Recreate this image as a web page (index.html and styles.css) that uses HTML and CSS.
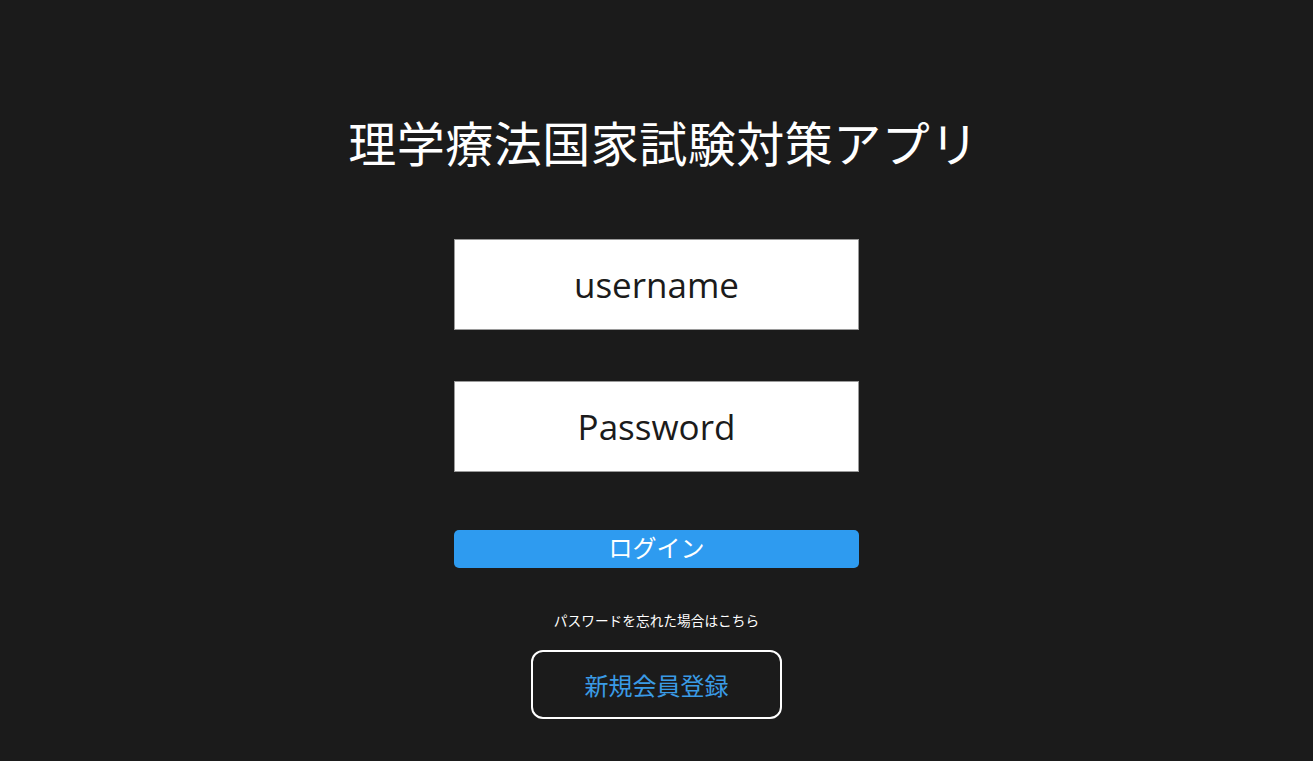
FILE: index.html
```html
<!DOCTYPE html>
<html lang="ja">
<head>
<meta charset="utf-8">
<title>理学療法国家試験対策アプリ</title>
<link rel="stylesheet" href="styles.css">
</head>
<body>
<main class="login">
  <h1 class="title">理学療法国家試験対策アプリ</h1>
  <form class="form">
    <input class="field" type="text" placeholder="username">
    <input class="field field-pass" type="password" placeholder="Password">
    <button class="btn-login" type="button">ログイン</button>
    <a class="forgot" href="#">パスワードを忘れた場合はこちら</a>
    <button class="btn-register" type="button">新規会員登録</button>
  </form>
</main>
</body>
</html>
```

FILE: styles.css
```css
html, body {
  margin: 0;
  padding: 0;
  background: #1b1b1b;
  height: 100%;
}
body {
  font-family: "Open Sans", "Noto Sans CJK JP", sans-serif;
  color: #fff;
}
.login {
  display: flex;
  flex-direction: column;
  align-items: center;
  padding-top: 106px;
}
.title {
  margin: 0;
  padding-left: 14px;
  font-family: "Noto Sans CJK JP", sans-serif;
  font-weight: 400;
  font-size: 48px;
  letter-spacing: 0.5px;
  line-height: 70px;
  height: 70px;
  color: #fff;
}
.form {
  display: flex;
  flex-direction: column;
  align-items: center;
  margin-top: 63px;
}
.field {
  box-sizing: border-box;
  width: 405px;
  height: 91px;
  margin: 0;
  border: 1px solid #9a9a9a;
  background: #fff;
  text-align: center;
  font-family: "Open Sans", sans-serif;
  font-size: 35px;
  color: #1b1b1b;
  outline: none;
  padding: 0;
}
.field::placeholder {
  color: #1b1b1b;
  opacity: 1;
}
.field-pass {
  margin-top: 51px;
}
.btn-login {
  box-sizing: border-box;
  width: 405px;
  height: 38px;
  margin-top: 58px;
  border: none;
  border-radius: 5px;
  background: #2e9bf0;
  color: #fff;
  font-family: "Noto Sans CJK JP", sans-serif;
  font-size: 24px;
  line-height: 34px;
  padding: 0 0 4px;
}
.forgot {
  margin-top: 42px;
  font-family: "Noto Sans CJK JP", sans-serif;
  font-size: 13.7px;
  line-height: 20px;
  color: #fff;
  text-decoration: none;
}
.btn-register {
  box-sizing: border-box;
  width: 251px;
  height: 69px;
  margin-top: 20px;
  border: 2px solid #fff;
  border-radius: 12px;
  background: transparent;
  color: #3a9be6;
  font-family: "Noto Sans CJK JP", sans-serif;
  font-size: 24px;
  padding: 0;
}
```
